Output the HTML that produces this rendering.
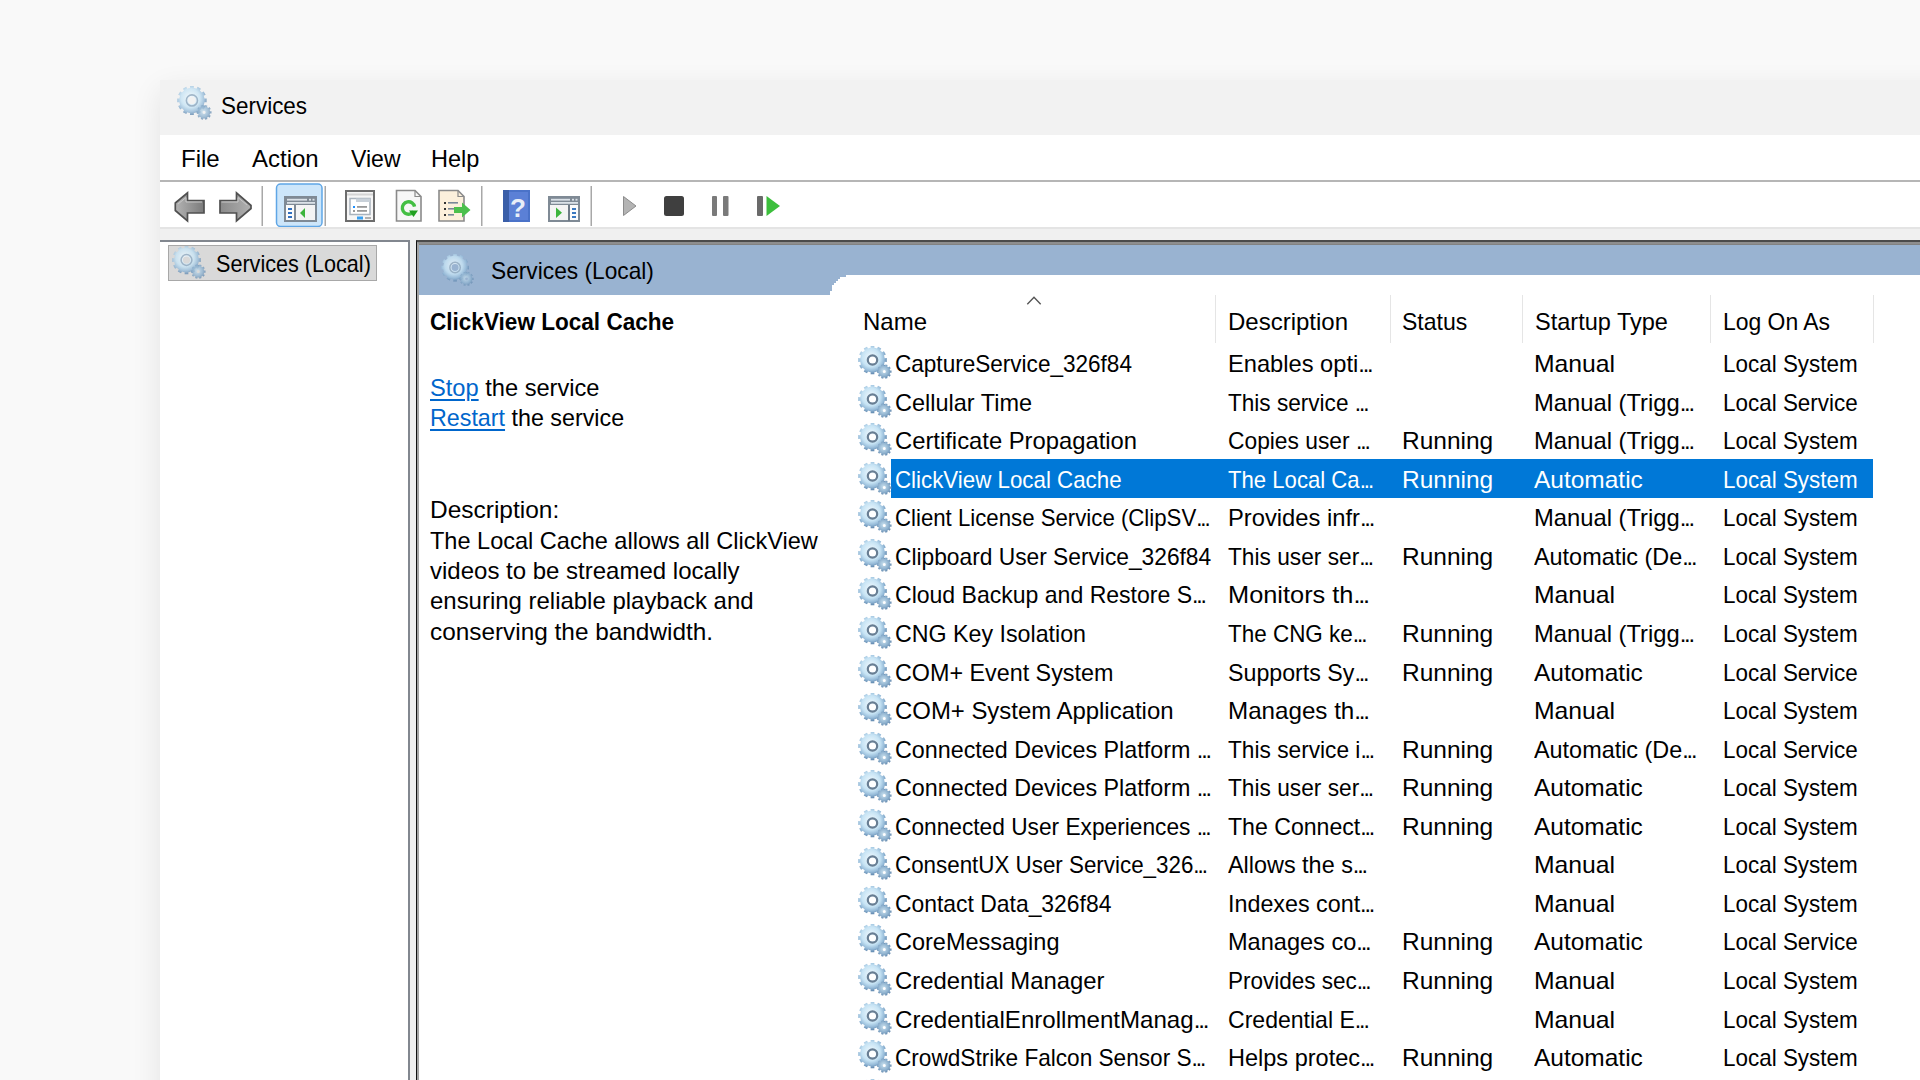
<!DOCTYPE html>
<html><head><meta charset="utf-8">
<style>
*{margin:0;padding:0;box-sizing:border-box}
html,body{width:1920px;height:1080px;overflow:hidden;background:#f9f9f9;font-family:"Liberation Sans",sans-serif;color:#000}
.a{position:absolute}
.t{position:absolute;font-size:24px;line-height:24px;white-space:nowrap}
.shadow{left:160px;top:80px;width:1800px;height:1100px;background:#fff;box-shadow:0 10px 28px 0 rgba(0,0,0,0.09)}
.title{left:160px;top:80px;width:1760px;height:55px;background:#f2f2f2}
.menu{left:160px;top:135px;width:1760px;height:45px;background:#fff}
.mline{left:160px;top:180px;width:1760px;height:2px;background:#b6b6b6}
.tool{left:160px;top:182px;width:1760px;height:45px;background:#fff}
.tline{left:160px;top:227px;width:1760px;height:2px;background:#e4e4e4}
.strip{left:160px;top:229px;width:1760px;height:851px;background:#f0f0f0}
.lpane{left:160px;top:240px;width:250px;height:840px;background:#fff;border-top:2px solid #82878f;border-right:2px solid #82878f}
.treeitem{left:168px;top:245px;width:209px;height:36px;background:#d9d9d9;border:1px solid #a8a8a8}
.rpane{left:416px;top:240px;width:1504px;height:840px;background:#fff;border-left:1px solid #111;border-top:2px solid #4b4b4b}
.rpane2{left:417px;top:242px;width:1503px;height:838px;border-left:2px solid #a3a3a3;border-top:2px solid #8e8e8e}
.band{left:419px;top:244px;width:1501px;height:51px;background:#99b3d1;border-top:1px solid #828282}
.tab{left:830px;top:275px;width:1090px;height:805px;background:#fff;clip-path:polygon(0 100%,0 16px,2px 16px,2px 10px,4px 10px,4px 8px,6px 8px,6px 6px,8px 6px,8px 4px,10px 4px,10px 2px,16px 2px,16px 0,100% 0,100% 100%)}
.sep{width:2px;background:#a9a9a9}
.cdiv{position:absolute;top:295px;height:48px;width:1px;background:#e5e5e5}
.cell{position:absolute;font-size:24px;line-height:24px;white-space:nowrap;transform-origin:0 0}
.cell.sel{color:#fff}
.el{font-style:normal;letter-spacing:-2.2px}
.selbar{position:absolute;left:891px;width:982px;height:38.5px;background:#0078d7}
.ricon{position:absolute;left:858px;width:34px;height:34px}
.gear{display:block}
a{color:#0066cc;text-decoration:underline;text-decoration-thickness:2px;text-underline-offset:3px}
</style></head><body>
<svg width="0" height="0" style="position:absolute">
<defs>
<radialGradient id="gg" cx="0.45" cy="0.42" r="0.58">
<stop offset="0" stop-color="#f2fbff"/>
<stop offset="0.55" stop-color="#c6e3f4"/>
<stop offset="0.8" stop-color="#95bad8"/>
<stop offset="1" stop-color="#5f86ad"/>
</radialGradient>
<radialGradient id="gs" cx="0.45" cy="0.45" r="0.6">
<stop offset="0" stop-color="#c8e0ee"/>
<stop offset="0.6" stop-color="#8fb2cf"/>
<stop offset="1" stop-color="#5c82a8"/>
</radialGradient>
<symbol id="g" viewBox="0 0 34 34">
<path d="M26.38,10.83 L26.66,12.16 L28.78,12.12 L28.78,15.88 L26.66,15.84 L26.38,17.20 L25.95,18.48 L27.80,19.51 L25.92,22.77 L24.11,21.68 L23.19,22.71 L22.18,23.61 L23.27,25.42 L20.01,27.30 L18.98,25.45 L17.67,25.88 L16.34,26.16 L16.38,28.28 L12.62,28.28 L12.66,26.16 L11.30,25.88 L10.02,25.45 L8.99,27.30 L5.73,25.42 L6.82,23.61 L5.79,22.69 L4.89,21.68 L3.08,22.77 L1.20,19.51 L3.05,18.48 L2.62,17.17 L2.34,15.84 L0.22,15.88 L0.22,12.12 L2.34,12.16 L2.62,10.80 L3.05,9.52 L1.20,8.49 L3.08,5.23 L4.89,6.32 L5.81,5.29 L6.82,4.39 L5.73,2.58 L8.99,0.70 L10.02,2.55 L11.33,2.12 L12.66,1.84 L12.62,-0.28 L16.38,-0.28 L16.34,1.84 L17.70,2.12 L18.98,2.55 L20.01,0.70 L23.27,2.58 L22.18,4.39 L23.21,5.31 L24.11,6.32 L25.92,5.23 L27.80,8.49 L25.95,9.52ZM10.90,14.00 a3.6,3.6 0 1,0 7.20,0 a3.6,3.6 0 1,0 -7.20,0Z" fill="url(#gg)" fill-rule="evenodd"/>
<circle cx="14.5" cy="14" r="4.7" fill="none" stroke="#687e93" stroke-width="2.2"/>
<path d="M31.91,23.78 L32.10,24.54 L33.51,24.46 L33.51,26.74 L32.10,26.66 L31.91,27.43 L31.62,28.15 L32.80,28.91 L31.46,30.76 L30.37,29.87 L29.76,30.38 L29.10,30.79 L29.61,32.10 L27.44,32.81 L27.09,31.45 L26.29,31.50 L25.51,31.45 L25.16,32.81 L22.99,32.10 L23.50,30.79 L22.83,30.37 L22.23,29.87 L21.14,30.76 L19.80,28.91 L20.98,28.15 L20.69,27.42 L20.50,26.66 L19.09,26.74 L19.09,24.46 L20.50,24.54 L20.69,23.77 L20.98,23.05 L19.80,22.29 L21.14,20.44 L22.23,21.33 L22.84,20.82 L23.50,20.41 L22.99,19.10 L25.16,18.39 L25.51,19.75 L26.31,19.70 L27.09,19.75 L27.44,18.39 L29.61,19.10 L29.10,20.41 L29.77,20.83 L30.37,21.33 L31.46,20.44 L32.80,22.29 L31.62,23.05ZM24.80,25.60 a1.5,1.5 0 1,0 3.00,0 a1.5,1.5 0 1,0 -3.00,0Z" fill="url(#gs)" fill-rule="evenodd"/>
</symbol>
<symbol id="gl" viewBox="0 0 34 34">
<path d="M26.38,10.83 L26.66,12.16 L28.78,12.12 L28.78,15.88 L26.66,15.84 L26.38,17.20 L25.95,18.48 L27.80,19.51 L25.92,22.77 L24.11,21.68 L23.19,22.71 L22.18,23.61 L23.27,25.42 L20.01,27.30 L18.98,25.45 L17.67,25.88 L16.34,26.16 L16.38,28.28 L12.62,28.28 L12.66,26.16 L11.30,25.88 L10.02,25.45 L8.99,27.30 L5.73,25.42 L6.82,23.61 L5.79,22.69 L4.89,21.68 L3.08,22.77 L1.20,19.51 L3.05,18.48 L2.62,17.17 L2.34,15.84 L0.22,15.88 L0.22,12.12 L2.34,12.16 L2.62,10.80 L3.05,9.52 L1.20,8.49 L3.08,5.23 L4.89,6.32 L5.81,5.29 L6.82,4.39 L5.73,2.58 L8.99,0.70 L10.02,2.55 L11.33,2.12 L12.66,1.84 L12.62,-0.28 L16.38,-0.28 L16.34,1.84 L17.70,2.12 L18.98,2.55 L20.01,0.70 L23.27,2.58 L22.18,4.39 L23.21,5.31 L24.11,6.32 L25.92,5.23 L27.80,8.49 L25.95,9.52ZM10.90,14.00 a3.6,3.6 0 1,0 7.20,0 a3.6,3.6 0 1,0 -7.20,0Z" fill="url(#gg)" fill-rule="evenodd" opacity="0.8"/>
<circle cx="14.5" cy="14" r="5.4" fill="none" stroke="#8aa2b8" stroke-width="1.5" opacity="0.75"/>
<path d="M31.91,23.78 L32.10,24.54 L33.51,24.46 L33.51,26.74 L32.10,26.66 L31.91,27.43 L31.62,28.15 L32.80,28.91 L31.46,30.76 L30.37,29.87 L29.76,30.38 L29.10,30.79 L29.61,32.10 L27.44,32.81 L27.09,31.45 L26.29,31.50 L25.51,31.45 L25.16,32.81 L22.99,32.10 L23.50,30.79 L22.83,30.37 L22.23,29.87 L21.14,30.76 L19.80,28.91 L20.98,28.15 L20.69,27.42 L20.50,26.66 L19.09,26.74 L19.09,24.46 L20.50,24.54 L20.69,23.77 L20.98,23.05 L19.80,22.29 L21.14,20.44 L22.23,21.33 L22.84,20.82 L23.50,20.41 L22.99,19.10 L25.16,18.39 L25.51,19.75 L26.31,19.70 L27.09,19.75 L27.44,18.39 L29.61,19.10 L29.10,20.41 L29.77,20.83 L30.37,21.33 L31.46,20.44 L32.80,22.29 L31.62,23.05ZM24.80,25.60 a1.5,1.5 0 1,0 3.00,0 a1.5,1.5 0 1,0 -3.00,0Z" fill="url(#gs)" fill-rule="evenodd" opacity="0.8"/>
</symbol>
</defs>
</svg>

<div class="a shadow"></div>
<div class="a title"></div>
<svg class="a" style="left:177px;top:86px" width="35" height="35"><use href="#gl"/></svg>
<div class="t" style="left:221px;top:93.5px;transform-origin:0 0;transform:scaleX(0.935)">Services</div>

<div class="a menu"></div>
<div class="t" style="left:181px;top:147px">File</div>
<div class="t" style="left:252px;top:147px">Action</div>
<div class="t" style="left:351px;top:147px;transform-origin:0 0;transform:scaleX(0.96)">View</div>
<div class="t" style="left:431px;top:147px;transform-origin:0 0;transform:scaleX(0.98)">Help</div>
<div class="a mline"></div>
<div class="a tool"></div>
<svg class="a" style="left:160px;top:182px" width="640" height="45" viewBox="160 182 640 45">
<defs>
<linearGradient id="arrb" x1="0" y1="0" x2="1" y2="0">
<stop offset="0" stop-color="#b4b4b4"/><stop offset="1" stop-color="#7a7a7a"/>
</linearGradient>
<linearGradient id="arrf" x1="0" y1="0" x2="1" y2="0">
<stop offset="0" stop-color="#8a8a8a"/><stop offset="1" stop-color="#b0b0b0"/>
</linearGradient>
</defs>
<!-- back arrow -->
<path d="M175.3,203 L187.5,192.8 L187.5,200.5 L204,200.5 L204,213 L187.5,213 L187.5,221 L175.3,210.5 Z" fill="url(#arrb)" stroke="#505050" stroke-width="1.7"/>
<path d="M178,204 L186,197.5 L186,202 L202,202" fill="none" stroke="#c8c8c8" stroke-width="1"/>
<!-- forward arrow -->
<path d="M251,205.5 L236.5,192.8 L236.5,200.5 L220,200.5 L220,213 L236.5,213 L236.5,221 L251,208.5 Z" fill="url(#arrf)" stroke="#505050" stroke-width="1.7"/>
<path d="M221.5,202 L238,202 L238,197.5 L247,205" fill="none" stroke="#c8c8c8" stroke-width="1"/>
<rect x="261.5" y="186" width="1.5" height="40" fill="#a8a8a8"/>
<!-- highlighted button -->
<rect x="276.5" y="184" width="45.5" height="42.5" rx="4" fill="#cde6fa" stroke="#5fa6e6" stroke-width="1.5"/>
<rect x="285" y="197" width="31" height="24" fill="#f4f4f4" stroke="#7f8a95" stroke-width="2"/>
<rect x="286" y="198" width="29" height="7" fill="#7f8a95"/>
<rect x="287" y="198.8" width="20" height="1.8" fill="#dbe2e8"/>
<rect x="309" y="198.8" width="2" height="1.8" fill="#dbe2e8"/><rect x="312.5" y="198.8" width="2" height="1.8" fill="#dbe2e8"/>
<rect x="287" y="202" width="28" height="1.8" fill="#dbe2e8"/>
<rect x="294" y="205" width="2" height="16" fill="#7f8a95"/>
<rect x="286" y="205" width="8" height="15" fill="#fbfbfb"/>
<rect x="288" y="208" width="4" height="2" fill="#2f6fc0"/>
<rect x="288" y="212" width="4" height="2" fill="#2f6fc0"/>
<rect x="288" y="216" width="4" height="2" fill="#2f6fc0"/>
<path d="M305,208 L305,218 L300,213 Z" fill="#3cb43c"/>
<rect x="324.5" y="186" width="1.5" height="40" fill="#a8a8a8"/>
<!-- properties -->
<rect x="346" y="191" width="28" height="30" fill="#f6f6f6" stroke="#6d6d6d" stroke-width="2"/>
<rect x="347" y="193.5" width="26" height="2" fill="#d4d4d4"/>
<rect x="350" y="198.5" width="20" height="16" fill="#fff" stroke="#a9b3bd" stroke-width="1.5"/>
<rect x="356" y="198.5" width="14" height="3.5" fill="#c9d1d9"/>
<rect x="353" y="206" width="2" height="2" fill="#1e90ff"/>
<rect x="357" y="206" width="10" height="1.8" fill="#999"/>
<rect x="353" y="210" width="2" height="2" fill="#999"/>
<rect x="357" y="210" width="10" height="1.8" fill="#999"/>
<rect x="357" y="216.5" width="6" height="3" fill="#3aa0f0"/>
<rect x="365" y="217" width="6" height="2" fill="#b0b0b0"/>
<!-- refresh doc -->
<path d="M396.5,190.5 L415,190.5 L421,196.5 L421,221 L396.5,221 Z" fill="#f7f7f7" stroke="#8a8a8a" stroke-width="1.6"/>
<path d="M415,190.5 L415,196.5 L421,196.5" fill="none" stroke="#8a8a8a" stroke-width="1.2"/>
<circle cx="408.5" cy="208" r="6.2" fill="none" stroke="#44bf44" stroke-width="3.4" stroke-dasharray="33 6" transform="rotate(35 408.5 208)"/>
<path d="M409,210.5 L418,210.5 L413.5,217 Z" fill="#22a022"/>
<!-- export list -->
<path d="M439,190.5 L458,190.5 L464,196.5 L464,221 L439,221 Z" fill="#fcf0dc" stroke="#8a8a8a" stroke-width="1.6"/>
<path d="M458,190.5 L458,196.5 L464,196.5" fill="none" stroke="#8a8a8a" stroke-width="1.2"/>
<rect x="444" y="202" width="2" height="2" fill="#333"/><rect x="448" y="202" width="10" height="1.6" fill="#7a8898"/>
<rect x="444" y="208" width="2" height="2" fill="#333"/><rect x="448" y="208" width="6" height="1.6" fill="#7a8898"/>
<rect x="444" y="214" width="2" height="2" fill="#333"/><rect x="448" y="214" width="6" height="1.6" fill="#7a8898"/>
<path d="M454,207 L462,207 L462,202.5 L470.5,210 L462,217.5 L462,213 L454,213 Z" fill="#4cc04c"/>
<rect x="481" y="186" width="1.5" height="40" fill="#a8a8a8"/>
<!-- help -->
<rect x="503" y="190" width="27" height="32" fill="#4a72c8"/>
<rect x="503" y="190" width="6" height="32" fill="#3a5ea8"/>
<rect x="509" y="192" width="19" height="28" fill="#5b80d6"/>
<text x="510" y="217" font-family="Liberation Sans" font-weight="bold" font-size="26" fill="#e8eef8">?</text>
<!-- action pane -->
<rect x="549" y="197" width="30" height="24" fill="#f4f4f4" stroke="#7f8a95" stroke-width="2"/>
<rect x="550" y="198" width="28" height="7" fill="#7f8a95"/>
<rect x="551" y="198.8" width="19" height="1.8" fill="#dbe2e8"/>
<rect x="572" y="198.8" width="2" height="1.8" fill="#dbe2e8"/><rect x="575.5" y="198.8" width="2" height="1.8" fill="#dbe2e8"/>
<rect x="551" y="202" width="27" height="1.8" fill="#dbe2e8"/>
<rect x="568" y="205" width="2" height="16" fill="#6f7a86"/>
<rect x="570" y="205" width="8" height="15" fill="#fbfbfb"/>
<rect x="572" y="208" width="4" height="2" fill="#3a78c0"/>
<rect x="572" y="212" width="4" height="2" fill="#3a78c0"/>
<rect x="572" y="216" width="4" height="2" fill="#3a78c0"/>
<path d="M556,207.5 L556,218 L562,212.8 Z" fill="#3cb43c"/>
<rect x="590.5" y="186" width="1.5" height="40" fill="#a8a8a8"/>
<!-- play -->
<path d="M623.5,196.5 L636,206 L623.5,215.5 Z" fill="#b4b4b4" stroke="#8c8c8c" stroke-width="1"/>
<!-- stop -->
<rect x="664" y="196" width="20" height="20" rx="2.5" fill="#3f3f3f"/>
<!-- pause -->
<rect x="712" y="196" width="5" height="20" rx="1" fill="#7a7a7a"/>
<rect x="723" y="196" width="5.5" height="20" rx="1" fill="#7a7a7a"/>
<!-- resume -->
<rect x="757" y="196" width="6" height="20" rx="1" fill="#6a6a6a"/>
<path d="M766.5,196 L780,206 L766.5,216 Z" fill="#3cbf3c"/>
</svg>

<div class="a tline"></div>
<div class="a strip"></div>

<div class="a lpane"></div>
<div class="a treeitem"></div>
<svg class="a" style="left:172px;top:246px" width="34" height="34"><use href="#gl"/></svg>
<div class="t" style="left:216px;top:252px;transform-origin:0 0;transform:scaleX(0.9)">Services (Local)</div>

<div class="a rpane"></div>
<div class="a rpane2"></div>
<div class="a band"></div>
<svg class="a" style="left:441px;top:254px" width="33" height="33"><use href="#gl"/></svg>
<div class="t" style="left:491px;top:258.5px;transform-origin:0 0;transform:scaleX(0.947)">Services (Local)</div>
<div class="a tab"></div>

<div class="t" style="left:430px;top:309.5px;font-weight:bold;transform-origin:0 0;transform:scaleX(0.94)">ClickView Local Cache</div>
<div class="t" style="left:430px;top:376px;transform-origin:0 0;transform:scaleX(0.985)"><a>Stop</a> the service</div>
<div class="t" style="left:430px;top:406px;transform-origin:0 0;transform:scaleX(0.97)"><a>Restart</a> the service</div>
<div class="t" style="left:430px;top:498.2px;transform-origin:0 0;transform:scaleX(1.02)">Description:</div>
<div class="t" style="left:430px;top:528.6px;transform-origin:0 0;transform:scaleX(0.98)">The Local Cache allows all ClickView</div>
<div class="t" style="left:430px;top:559.0px;transform-origin:0 0;transform:scaleX(1.0)">videos to be streamed locally</div>
<div class="t" style="left:430px;top:589.4px;transform-origin:0 0;transform:scaleX(0.998)">ensuring reliable playback and</div>
<div class="t" style="left:430px;top:619.8px;transform-origin:0 0;transform:scaleX(1.015)">conserving the bandwidth.</div>

<svg class="a" style="left:1025px;top:294px" width="18" height="13"><path d="M2.3,10.3 L9,3.2 L15.7,10.3" fill="none" stroke="#555" stroke-width="1.35"/></svg>
<div class="t" style="left:863px;top:310px">Name</div>
<div class="t" style="left:1228px;top:310px">Description</div>
<div class="t" style="left:1402px;top:310px;transform-origin:0 0;transform:scaleX(0.96)">Status</div>
<div class="t" style="left:1535px;top:310px;transform-origin:0 0;transform:scaleX(0.98)">Startup Type</div>
<div class="t" style="left:1723px;top:310px;transform-origin:0 0;transform:scaleX(0.955)">Log On As</div>
<div class="cdiv" style="left:1215px"></div>
<div class="cdiv" style="left:1390px"></div>
<div class="cdiv" style="left:1522px"></div>
<div class="cdiv" style="left:1710px"></div>
<div class="cdiv" style="left:1873px"></div>

<div class="ricon" style="top:346.0px"><svg class="gear" viewBox="0 0 34 34" width="34" height="34"><use href="#g"/></svg></div><div class="cell" style="left:895px;top:352.0px;transform:scaleX(0.9396)">CaptureService_326f84</div><div class="cell" style="left:1228px;top:352.0px;transform:scaleX(0.9860)">Enables opti<i class="el">...</i></div><div class="cell" style="left:1534px;top:352.0px;transform:scaleX(1.0300)">Manual</div><div class="cell" style="left:1723px;top:352.0px;transform:scaleX(0.9350)">Local System</div>
<div class="ricon" style="top:384.6px"><svg class="gear" viewBox="0 0 34 34" width="34" height="34"><use href="#g"/></svg></div><div class="cell" style="left:895px;top:390.6px;transform:scaleX(0.9786)">Cellular Time</div><div class="cell" style="left:1228px;top:390.6px;transform:scaleX(0.9409)">This service <i class="el">...</i></div><div class="cell" style="left:1534px;top:390.6px;transform:scaleX(0.9900)">Manual (Trigg<i class="el">...</i></div><div class="cell" style="left:1723px;top:390.6px;transform:scaleX(0.9350)">Local Service</div>
<div class="ricon" style="top:423.1px"><svg class="gear" viewBox="0 0 34 34" width="34" height="34"><use href="#g"/></svg></div><div class="cell" style="left:895px;top:429.1px;transform:scaleX(0.9916)">Certificate Propagation</div><div class="cell" style="left:1228px;top:429.1px;transform:scaleX(0.9496)">Copies user <i class="el">...</i></div><div class="cell" style="left:1402px;top:429.1px;transform:scaleX(1.0200)">Running</div><div class="cell" style="left:1534px;top:429.1px;transform:scaleX(0.9900)">Manual (Trigg<i class="el">...</i></div><div class="cell" style="left:1723px;top:429.1px;transform:scaleX(0.9350)">Local System</div>
<div class="selbar" style="top:459.2px"></div><div class="ricon" style="top:461.7px"><svg class="gear" viewBox="0 0 34 34" width="34" height="34"><use href="#g"/></svg></div><div class="cell sel" style="left:895px;top:467.7px;transform:scaleX(0.9300)">ClickView Local Cache</div><div class="cell sel" style="left:1228px;top:467.7px;transform:scaleX(0.9222)">The Local Ca<i class="el">...</i></div><div class="cell sel" style="left:1402px;top:467.7px;transform:scaleX(1.0200)">Running</div><div class="cell sel" style="left:1534px;top:467.7px;transform:scaleX(1.0200)">Automatic</div><div class="cell sel" style="left:1723px;top:467.7px;transform:scaleX(0.9350)">Local System</div>
<div class="ricon" style="top:500.2px"><svg class="gear" viewBox="0 0 34 34" width="34" height="34"><use href="#g"/></svg></div><div class="cell" style="left:895px;top:506.2px;transform:scaleX(0.9255)">Client License Service (ClipSV<i class="el">...</i></div><div class="cell" style="left:1228px;top:506.2px;transform:scaleX(0.9889)">Provides infr<i class="el">...</i></div><div class="cell" style="left:1534px;top:506.2px;transform:scaleX(0.9900)">Manual (Trigg<i class="el">...</i></div><div class="cell" style="left:1723px;top:506.2px;transform:scaleX(0.9350)">Local System</div>
<div class="ricon" style="top:538.8px"><svg class="gear" viewBox="0 0 34 34" width="34" height="34"><use href="#g"/></svg></div><div class="cell" style="left:895px;top:544.8px;transform:scaleX(0.9480)">Clipboard User Service_326f84</div><div class="cell" style="left:1228px;top:544.8px;transform:scaleX(0.9458)">This user ser<i class="el">...</i></div><div class="cell" style="left:1402px;top:544.8px;transform:scaleX(1.0200)">Running</div><div class="cell" style="left:1534px;top:544.8px;transform:scaleX(0.9750)">Automatic (De<i class="el">...</i></div><div class="cell" style="left:1723px;top:544.8px;transform:scaleX(0.9350)">Local System</div>
<div class="ricon" style="top:577.4px"><svg class="gear" viewBox="0 0 34 34" width="34" height="34"><use href="#g"/></svg></div><div class="cell" style="left:895px;top:583.4px;transform:scaleX(0.9597)">Cloud Backup and Restore S<i class="el">...</i></div><div class="cell" style="left:1228px;top:583.4px;transform:scaleX(1.0569)">Monitors th<i class="el">...</i></div><div class="cell" style="left:1534px;top:583.4px;transform:scaleX(1.0300)">Manual</div><div class="cell" style="left:1723px;top:583.4px;transform:scaleX(0.9350)">Local System</div>
<div class="ricon" style="top:615.9px"><svg class="gear" viewBox="0 0 34 34" width="34" height="34"><use href="#g"/></svg></div><div class="cell" style="left:895px;top:621.9px;transform:scaleX(0.9676)">CNG Key Isolation</div><div class="cell" style="left:1228px;top:621.9px;transform:scaleX(0.9357)">The CNG ke<i class="el">...</i></div><div class="cell" style="left:1402px;top:621.9px;transform:scaleX(1.0200)">Running</div><div class="cell" style="left:1534px;top:621.9px;transform:scaleX(0.9900)">Manual (Trigg<i class="el">...</i></div><div class="cell" style="left:1723px;top:621.9px;transform:scaleX(0.9350)">Local System</div>
<div class="ricon" style="top:654.5px"><svg class="gear" viewBox="0 0 34 34" width="34" height="34"><use href="#g"/></svg></div><div class="cell" style="left:895px;top:660.5px;transform:scaleX(0.9715)">COM+ Event System</div><div class="cell" style="left:1228px;top:660.5px;transform:scaleX(0.9672)">Supports Sy<i class="el">...</i></div><div class="cell" style="left:1402px;top:660.5px;transform:scaleX(1.0200)">Running</div><div class="cell" style="left:1534px;top:660.5px;transform:scaleX(1.0200)">Automatic</div><div class="cell" style="left:1723px;top:660.5px;transform:scaleX(0.9350)">Local Service</div>
<div class="ricon" style="top:693.0px"><svg class="gear" viewBox="0 0 34 34" width="34" height="34"><use href="#g"/></svg></div><div class="cell" style="left:895px;top:699.0px;transform:scaleX(0.9966)">COM+ System Application</div><div class="cell" style="left:1228px;top:699.0px;transform:scaleX(1.0071)">Manages th<i class="el">...</i></div><div class="cell" style="left:1534px;top:699.0px;transform:scaleX(1.0300)">Manual</div><div class="cell" style="left:1723px;top:699.0px;transform:scaleX(0.9350)">Local System</div>
<div class="ricon" style="top:731.6px"><svg class="gear" viewBox="0 0 34 34" width="34" height="34"><use href="#g"/></svg></div><div class="cell" style="left:895px;top:737.6px;transform:scaleX(0.9710)">Connected Devices Platform <i class="el">...</i></div><div class="cell" style="left:1228px;top:737.6px;transform:scaleX(0.9454)">This service i<i class="el">...</i></div><div class="cell" style="left:1402px;top:737.6px;transform:scaleX(1.0200)">Running</div><div class="cell" style="left:1534px;top:737.6px;transform:scaleX(0.9750)">Automatic (De<i class="el">...</i></div><div class="cell" style="left:1723px;top:737.6px;transform:scaleX(0.9350)">Local Service</div>
<div class="ricon" style="top:770.2px"><svg class="gear" viewBox="0 0 34 34" width="34" height="34"><use href="#g"/></svg></div><div class="cell" style="left:895px;top:776.2px;transform:scaleX(0.9710)">Connected Devices Platform <i class="el">...</i></div><div class="cell" style="left:1228px;top:776.2px;transform:scaleX(0.9458)">This user ser<i class="el">...</i></div><div class="cell" style="left:1402px;top:776.2px;transform:scaleX(1.0200)">Running</div><div class="cell" style="left:1534px;top:776.2px;transform:scaleX(1.0200)">Automatic</div><div class="cell" style="left:1723px;top:776.2px;transform:scaleX(0.9350)">Local System</div>
<div class="ricon" style="top:808.7px"><svg class="gear" viewBox="0 0 34 34" width="34" height="34"><use href="#g"/></svg></div><div class="cell" style="left:895px;top:814.7px;transform:scaleX(0.9462)">Connected User Experiences <i class="el">...</i></div><div class="cell" style="left:1228px;top:814.7px;transform:scaleX(0.9621)">The Connect<i class="el">...</i></div><div class="cell" style="left:1402px;top:814.7px;transform:scaleX(1.0200)">Running</div><div class="cell" style="left:1534px;top:814.7px;transform:scaleX(1.0200)">Automatic</div><div class="cell" style="left:1723px;top:814.7px;transform:scaleX(0.9350)">Local System</div>
<div class="ricon" style="top:847.3px"><svg class="gear" viewBox="0 0 34 34" width="34" height="34"><use href="#g"/></svg></div><div class="cell" style="left:895px;top:853.3px;transform:scaleX(0.9318)">ConsentUX User Service_326<i class="el">...</i></div><div class="cell" style="left:1228px;top:853.3px;transform:scaleX(0.9750)">Allows the s<i class="el">...</i></div><div class="cell" style="left:1534px;top:853.3px;transform:scaleX(1.0300)">Manual</div><div class="cell" style="left:1723px;top:853.3px;transform:scaleX(0.9350)">Local System</div>
<div class="ricon" style="top:885.8px"><svg class="gear" viewBox="0 0 34 34" width="34" height="34"><use href="#g"/></svg></div><div class="cell" style="left:895px;top:891.8px;transform:scaleX(0.9540)">Contact Data_326f84</div><div class="cell" style="left:1228px;top:891.8px;transform:scaleX(0.9707)">Indexes cont<i class="el">...</i></div><div class="cell" style="left:1534px;top:891.8px;transform:scaleX(1.0300)">Manual</div><div class="cell" style="left:1723px;top:891.8px;transform:scaleX(0.9350)">Local System</div>
<div class="ricon" style="top:924.4px"><svg class="gear" viewBox="0 0 34 34" width="34" height="34"><use href="#g"/></svg></div><div class="cell" style="left:895px;top:930.4px;transform:scaleX(0.9783)">CoreMessaging</div><div class="cell" style="left:1228px;top:930.4px;transform:scaleX(0.9812)">Manages co<i class="el">...</i></div><div class="cell" style="left:1402px;top:930.4px;transform:scaleX(1.0200)">Running</div><div class="cell" style="left:1534px;top:930.4px;transform:scaleX(1.0200)">Automatic</div><div class="cell" style="left:1723px;top:930.4px;transform:scaleX(0.9350)">Local Service</div>
<div class="ricon" style="top:963.0px"><svg class="gear" viewBox="0 0 34 34" width="34" height="34"><use href="#g"/></svg></div><div class="cell" style="left:895px;top:969.0px;transform:scaleX(0.9938)">Credential Manager</div><div class="cell" style="left:1228px;top:969.0px;transform:scaleX(0.9373)">Provides sec<i class="el">...</i></div><div class="cell" style="left:1402px;top:969.0px;transform:scaleX(1.0200)">Running</div><div class="cell" style="left:1534px;top:969.0px;transform:scaleX(1.0300)">Manual</div><div class="cell" style="left:1723px;top:969.0px;transform:scaleX(0.9350)">Local System</div>
<div class="ricon" style="top:1001.5px"><svg class="gear" viewBox="0 0 34 34" width="34" height="34"><use href="#g"/></svg></div><div class="cell" style="left:895px;top:1007.5px;transform:scaleX(1.0039)">CredentialEnrollmentManag<i class="el">...</i></div><div class="cell" style="left:1228px;top:1007.5px;transform:scaleX(0.9602)">Credential E<i class="el">...</i></div><div class="cell" style="left:1534px;top:1007.5px;transform:scaleX(1.0300)">Manual</div><div class="cell" style="left:1723px;top:1007.5px;transform:scaleX(0.9350)">Local System</div>
<div class="ricon" style="top:1040.1px"><svg class="gear" viewBox="0 0 34 34" width="34" height="34"><use href="#g"/></svg></div><div class="cell" style="left:895px;top:1046.1px;transform:scaleX(0.9420)">CrowdStrike Falcon Sensor S<i class="el">...</i></div><div class="cell" style="left:1228px;top:1046.1px;transform:scaleX(0.9798)">Helps protec<i class="el">...</i></div><div class="cell" style="left:1402px;top:1046.1px;transform:scaleX(1.0200)">Running</div><div class="cell" style="left:1534px;top:1046.1px;transform:scaleX(1.0200)">Automatic</div><div class="cell" style="left:1723px;top:1046.1px;transform:scaleX(0.9350)">Local System</div>
<div class="ricon" style="top:1078.6px"><svg class="gear" viewBox="0 0 34 34" width="34" height="34"><use href="#g"/></svg></div>
</body></html>
